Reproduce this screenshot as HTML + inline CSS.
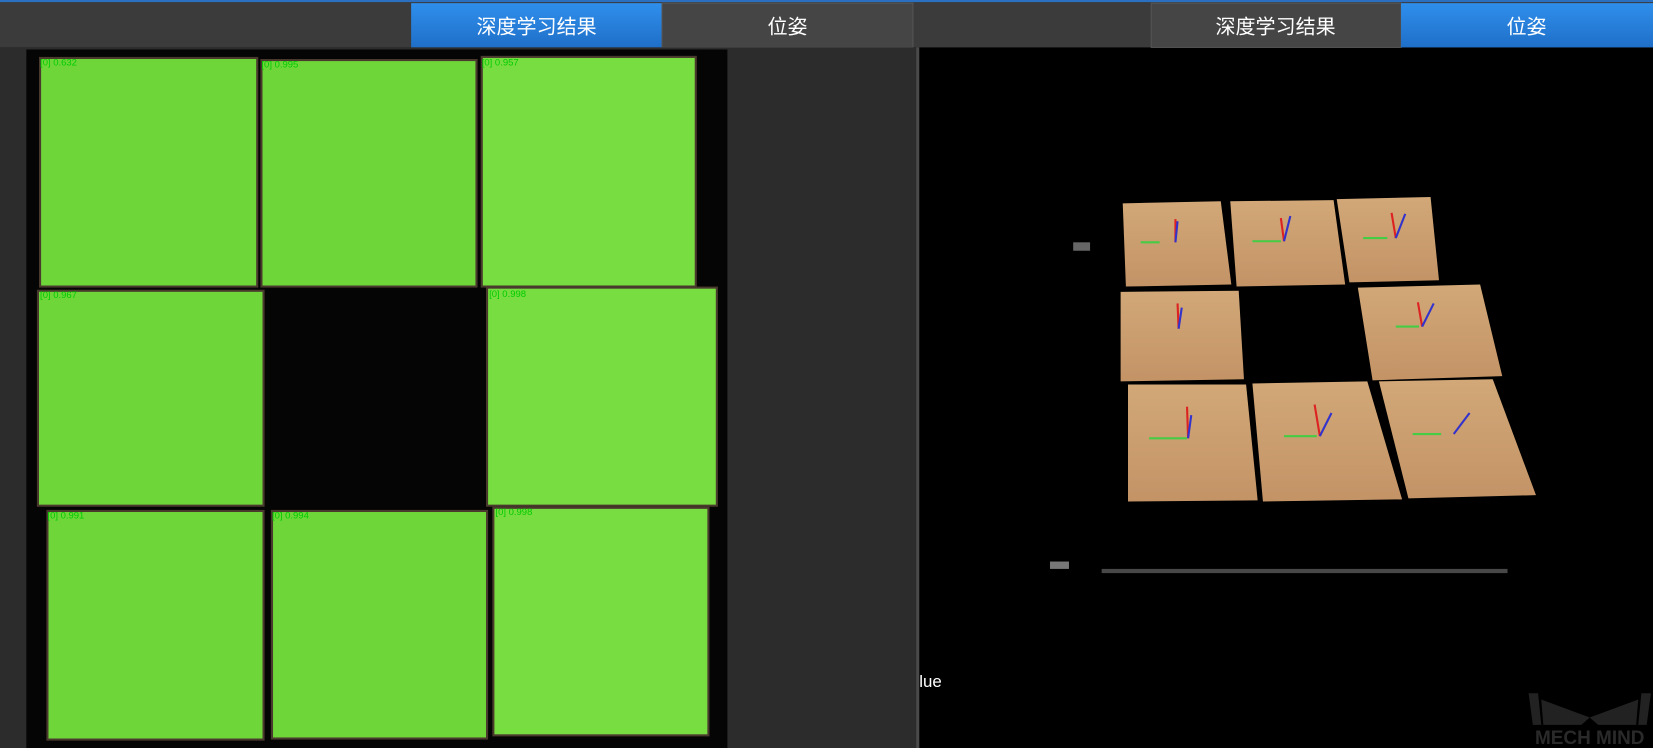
<!DOCTYPE html>
<html><head><meta charset="utf-8"><style>
html,body{margin:0;padding:0;background:#000;width:1653px;height:748px;overflow:hidden}
svg{display:block}
text{font-family:"Liberation Sans","Noto Sans CJK SC",sans-serif}
</style></head><body>
<svg width="1653" height="748" viewBox="0 0 1568 710" preserveAspectRatio="none" xmlns="http://www.w3.org/2000/svg">
<defs>
<linearGradient id="bl" x1="0" y1="0" x2="0" y2="1"><stop offset="0" stop-color="#2f8fec"/><stop offset="1" stop-color="#1f6fc8"/></linearGradient>
<linearGradient id="br" x1="0" y1="0" x2="0" y2="1"><stop offset="0" stop-color="#d2a878"/><stop offset="1" stop-color="#c39366"/></linearGradient>
</defs>
<!-- header -->
<rect x="0" y="0" width="1568" height="45" fill="#3b3b3b"/>
<rect x="0" y="0" width="1568" height="2" fill="#2a6fc0"/>
<rect x="390" y="3" width="238" height="42" fill="url(#bl)"/>
<rect x="628" y="3" width="238" height="42" fill="#454545" stroke="#555" stroke-width="1"/>
<text x="509" y="32" fill="#fff" font-size="19" text-anchor="middle">深度学习结果</text>
<text x="747" y="32" fill="#fff" font-size="19" text-anchor="middle">位姿</text>
<rect x="1092" y="3" width="237" height="42" fill="#454545" stroke="#555" stroke-width="1"/>
<rect x="1329" y="3" width="239" height="42" fill="url(#bl)"/>
<text x="1210" y="32" fill="#fff" font-size="19" text-anchor="middle">深度学习结果</text>
<text x="1448" y="32" fill="#fff" font-size="19" text-anchor="middle">位姿</text>
<!-- left panel -->
<rect x="0" y="45" width="869" height="665" fill="#2c2c2c"/>
<rect x="869" y="45" width="3" height="665" fill="#4a4a4a"/>
<rect x="25" y="47" width="665" height="663" fill="#050505"/>
<g fill="#6fd63a" stroke="#4a3a2e" stroke-width="2">
<rect x="38" y="55" width="206" height="217"/>
<rect x="248" y="57" width="204" height="215"/>
<rect x="457" y="54" width="203" height="218" fill="#78dd40"/>
<rect x="36" y="276" width="214" height="204"/>
<rect x="462" y="273" width="218" height="207" fill="#78dd40"/>
<rect x="45" y="485" width="205" height="217"/>
<rect x="258" y="485" width="204" height="216"/>
<rect x="468" y="482" width="204" height="216" fill="#78dd40"/>
</g>
<g fill="#0c0" font-size="9" font-family="Liberation Mono,monospace">
<text x="38" y="62">[0] 0.632</text><text x="248" y="64">[0] 0.995</text><text x="457" y="62">[0] 0.957</text>
<text x="38" y="283">[0] 0.967</text><text x="464" y="282">[0] 0.998</text>
<text x="45" y="492">[0] 0.991</text><text x="258" y="492">[0] 0.994</text><text x="470" y="489">[0] 0.998</text>
</g>
<text x="872" y="652" fill="#fff" font-size="16">lue</text>
<!-- right 3D -->
<g fill="url(#br)">
<polygon points="1065,193 1158,191 1168,270 1068,272"/>
<polygon points="1167,191 1265,190 1276,270 1173,272"/>
<polygon points="1268,189 1357,187 1365,266 1280,268"/>
<polygon points="1063,277 1175,276 1180,360 1063,362"/>
<polygon points="1288,273 1404,270 1425,357 1302,361"/>
<polygon points="1070,365 1182,365 1193,475 1070,476"/>
<polygon points="1188,364 1297,362 1330,474 1198,476"/>
<polygon points="1308,362 1416,360 1457,470 1336,473"/>
</g>
<g stroke-width="2">
<line x1="1082" y1="230" x2="1100" y2="230" stroke="#4c4"/><line x1="1115" y1="230" x2="1115" y2="208" stroke="#d22"/><line x1="1115" y1="230" x2="1117" y2="210" stroke="#33c"/>
<line x1="1188" y1="229" x2="1215" y2="229" stroke="#4c4"/><line x1="1218" y1="229" x2="1215" y2="207" stroke="#d22"/><line x1="1218" y1="229" x2="1224" y2="205" stroke="#33c"/>
<line x1="1293" y1="226" x2="1316" y2="226" stroke="#4c4"/><line x1="1324" y1="226" x2="1320" y2="202" stroke="#d22"/><line x1="1324" y1="226" x2="1333" y2="203" stroke="#33c"/>
<line x1="1118" y1="312" x2="1117" y2="288" stroke="#d22"/><line x1="1118" y1="312" x2="1121" y2="292" stroke="#33c"/>
<line x1="1324" y1="310" x2="1346" y2="310" stroke="#4c4"/><line x1="1349" y1="310" x2="1345" y2="287" stroke="#d22"/><line x1="1349" y1="310" x2="1360" y2="288" stroke="#33c"/>
<line x1="1090" y1="416" x2="1126" y2="416" stroke="#4c4"/><line x1="1127" y1="416" x2="1126" y2="386" stroke="#d22"/><line x1="1127" y1="416" x2="1130" y2="394" stroke="#33c"/>
<line x1="1218" y1="414" x2="1249" y2="414" stroke="#4c4"/><line x1="1252" y1="414" x2="1247" y2="384" stroke="#d22"/><line x1="1252" y1="414" x2="1263" y2="392" stroke="#33c"/>
<line x1="1340" y1="412" x2="1367" y2="412" stroke="#4c4"/><line x1="1379" y1="412" x2="1394" y2="392" stroke="#33c"/>
</g>
<rect x="1045" y="540" width="385" height="4" fill="#5a5a5a" opacity="0.8"/>
<rect x="996" y="533" width="18" height="7" fill="#777"/>
<rect x="1018" y="230" width="16" height="8" fill="#666"/>
<!-- logo -->
<g fill="#222">
<polygon points="1450,658 1459,658 1462,688 1454,688"/>
<polygon points="1462,664 1508,681 1500,688 1464,688"/>
<polygon points="1554,664 1508,681 1516,688 1552,688"/>
<polygon points="1566,658 1557,658 1554,688 1562,688"/>
</g>
<text x="1508" y="706" fill="#2a2a2a" font-size="18" text-anchor="middle" font-weight="bold">MECH MIND</text>
</svg>
</body></html>
